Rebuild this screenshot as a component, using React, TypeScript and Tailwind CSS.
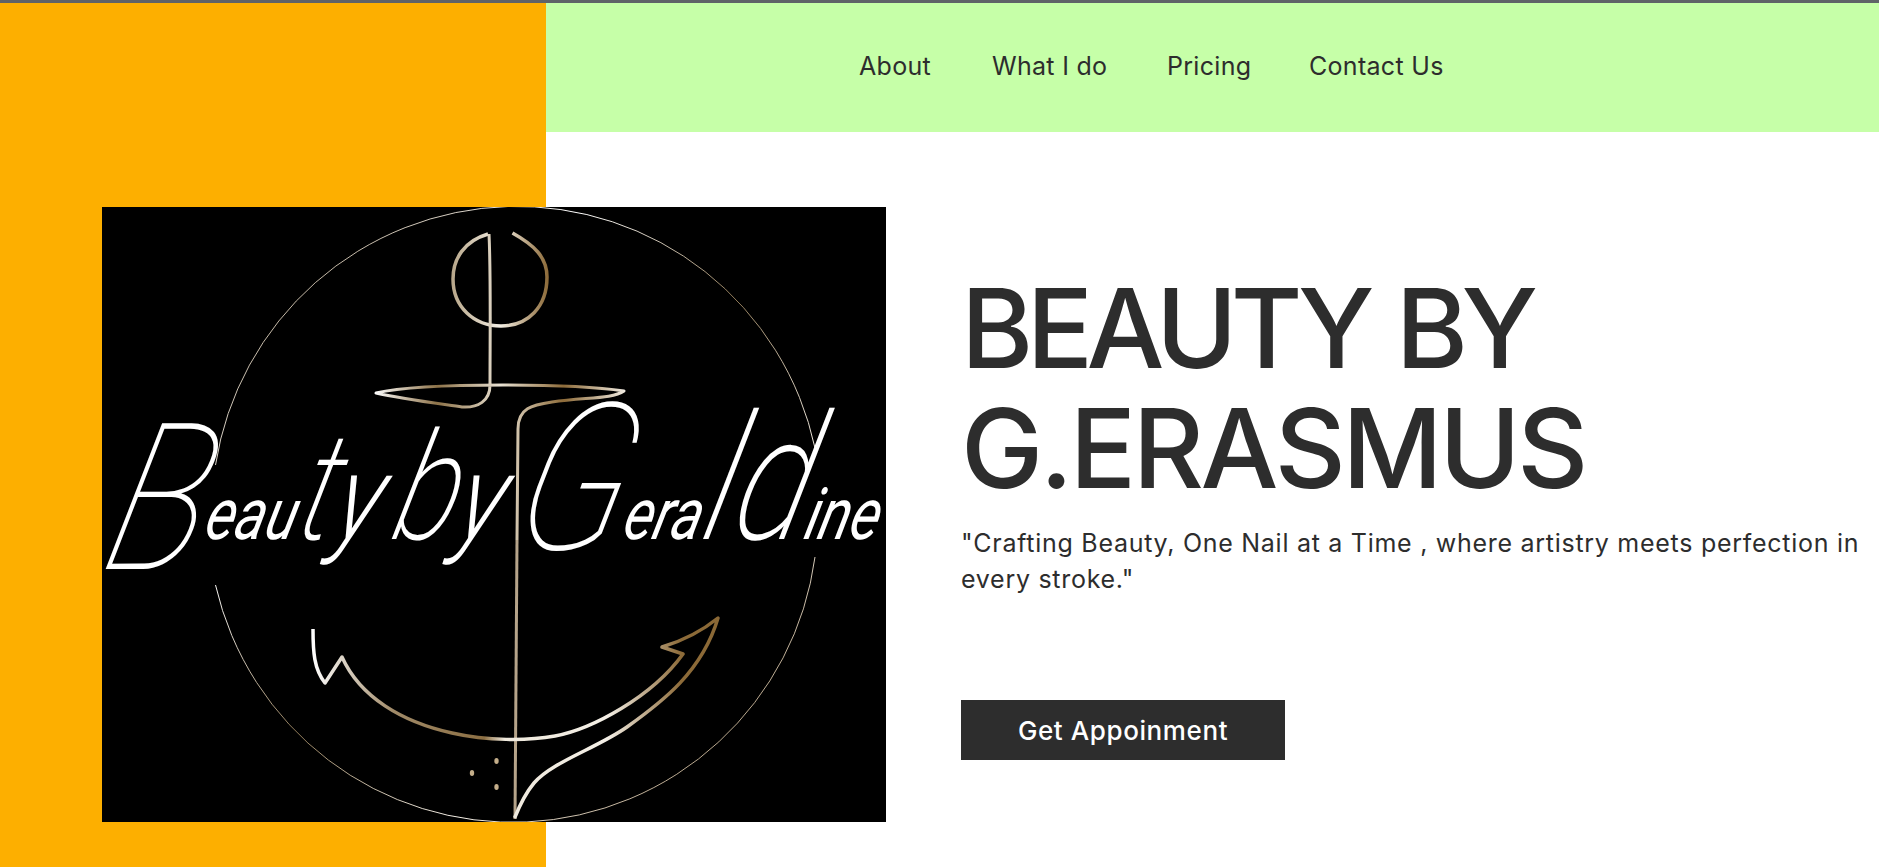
const links = [
  { label: "About", cls: "w-[133px]" },
  { label: "What I do", cls: "w-[175px]" },
  { label: "Pricing", cls: "w-[142px]" },
  { label: "Contact Us", cls: "w-[140px]" },
];

function Logo() {
  return (
    <svg width="784" height="615" viewBox="0 0 784 615" className="block shrink-0 bg-black">
      <defs>
        <linearGradient id="ring" gradientUnits="userSpaceOnUse" x1="110" y1="0" x2="720" y2="615">
          <stop offset="0" stopColor="#8a7350" />
          <stop offset="0.3" stopColor="#ffffff" />
          <stop offset="0.5" stopColor="#8f7a58" />
          <stop offset="0.7" stopColor="#f5f0e8" />
          <stop offset="1" stopColor="#7d5f33" />
        </linearGradient>
        <linearGradient id="gold" gradientUnits="userSpaceOnUse" x1="210" y1="0" x2="620" y2="0">
          <stop offset="0" stopColor="#ffffff" />
          <stop offset="0.2" stopColor="#a08a68" />
          <stop offset="0.42" stopColor="#8c6f43" />
          <stop offset="0.47" stopColor="#efe9dd" />
          <stop offset="0.72" stopColor="#f4efe6" />
          <stop offset="0.9" stopColor="#8d6b39" />
          <stop offset="1" stopColor="#8a6835" />
        </linearGradient>
        <linearGradient id="bowl" gradientUnits="userSpaceOnUse" x1="350" y1="0" x2="446" y2="0">
          <stop offset="0" stopColor="#b8a78a" />
          <stop offset="0.5" stopColor="#f3eee4" />
          <stop offset="1" stopColor="#8d6b39" />
        </linearGradient>
        <linearGradient id="dish" gradientUnits="userSpaceOnUse" x1="272" y1="0" x2="525" y2="0">
          <stop offset="0" stopColor="#ffffff" />
          <stop offset="0.25" stopColor="#8d7248" />
          <stop offset="0.5" stopColor="#e9e2d4" />
          <stop offset="0.75" stopColor="#8d6b39" />
          <stop offset="1" stopColor="#f4efe6" />
        </linearGradient>
      </defs>

      <g fill="none" stroke="url(#ring)" strokeWidth="1">
        <path d="M113.5 258 A305 306 0 0 1 713 241" />
        <path d="M713 350 A305 306 0 0 1 113.5 378" />
      </g>

      <path d="M386 27 C362 34 351 52 351 72 C351 100 372 119 399 119 C426 119 445 100 445 70 C445 50 432 38 410.5 26" fill="none" stroke="url(#bowl)" strokeWidth="3.5" />
      <path d="M387 27 C389 70 388 130 388 178 C388 194 376 201 360 200 C340 197 300 192 274 186 C300 180 340 178 401 178 C450 178 495 180 522 184 C510 192 485 190 450 195 C430 198 416 201 416 222 L415 333" fill="none" stroke="url(#dish)" strokeWidth="3" strokeLinejoin="round" />
      <path d="M415 333 L413 612" fill="none" stroke="#b6a48a" strokeWidth="3" />

      <path d="M211 422 C211 445 212 462 223 476 L240 450 C258 490 300 515 350 526 C385 534 425 534 453 529 C490 522 550 490 581 447 L560 440 C580 434 600 424 616 411 C600 465 560 495 525 520 C495 541 450 555 432 576 C422 588 417 600 412.6 611" fill="none" stroke="url(#gold)" strokeWidth="3.5" strokeLinejoin="round" />

      <ellipse cx="394.5" cy="554" rx="2.2" ry="3" fill="#c4ae8a" />
      <ellipse cx="370" cy="566" rx="2.2" ry="3" fill="#c4ae8a" />
      <ellipse cx="394.5" cy="580" rx="2.2" ry="3" fill="#c4ae8a" />

      <text
        x="0"
        y="0"
        transform="translate(4 332) skewX(-14)"
        textLength="770"
        lengthAdjust="spacingAndGlyphs"
        fontFamily="Roboto, sans-serif"
        fontStyle="italic"
        fontWeight="400"
        fontSize="72"
        fill="#ffffff"
      >
        <tspan fontSize="205" dy="30" fontWeight="100">B</tspan>
        <tspan dy="-30">eau</tspan>
        <tspan fontSize="150" fontWeight="200">t</tspan>
        <tspan fontSize="120" fontWeight="300">y</tspan>
        {" "}
        <tspan fontSize="150" fontWeight="200">b</tspan>
        <tspan fontSize="120" fontWeight="300">y</tspan>
        {" "}
        <tspan fontSize="205" dy="10" fontWeight="100">G</tspan>
        <tspan dy="-10">era</tspan>
        <tspan fontSize="175" fontWeight="200">ld</tspan>
        ine
      </text>
    </svg>
  );
}

export default function App() {
  return (
    <div className="flex h-[867px] flex-col overflow-hidden bg-white font-['Inter',sans-serif] text-[#2d2d2d]">
      <div className="h-[3px] shrink-0 bg-[#5f6368]" />
      <div className="flex flex-1">
        <aside className="w-[546px] shrink-0 bg-[#fdaf00] pl-[102px] pt-[204px]">
          <Logo />
        </aside>
        <main className="flex-1">
          <nav className="flex h-[129px] items-center bg-[#c6ffa8] pb-[2px] pl-[313px] text-[25px] leading-none tracking-[0.3px]">
            {links.map((l) => (
              <a key={l.label} className={l.cls}>
                {l.label}
              </a>
            ))}
          </nav>
          <section className="pl-[415px] pt-[136px]">
            <h1 className="text-[110px] font-medium leading-[120px]">
              <span className="block tracking-[-6.5px] [word-spacing:5px]">BEAUTY BY</span>
              <span className="block tracking-[-3.4px]">G.ERASMUS</span>
            </h1>
            <p className="mt-[17px] w-[905px] text-[25px] leading-[36px] tracking-[0.72px]">
              "Crafting Beauty, One Nail at a Time , where artistry meets perfection in every stroke."
            </p>
            <button className="mt-[103px] flex h-[60px] w-[324px] items-center justify-center bg-[#2d2d2d] text-[26px] font-medium tracking-[0.6px] text-white">
              Get Appoinment
            </button>
          </section>
        </main>
      </div>
    </div>
  );
}
